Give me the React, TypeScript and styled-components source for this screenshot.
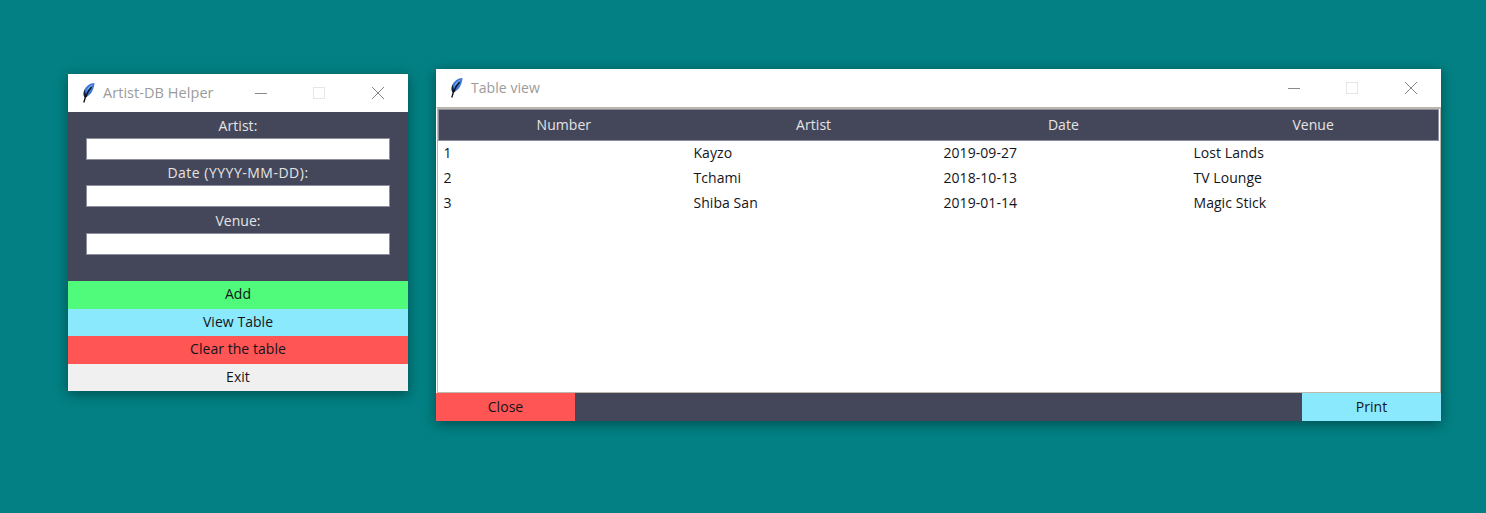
import React from "react";
import styled, { createGlobalStyle } from "styled-components";

const Global = createGlobalStyle`
  html, body { margin: 0; padding: 0; height: 100%; background: #028083; overflow: hidden; }
  #root { width: 1486px; height: 513px; }
  * { box-sizing: border-box; }
`;

const Desktop = styled.div`
  position: relative;
  width: 1486px;
  height: 513px;
  background: #028083;
  font-family: "Open Sans", "Noto Sans", sans-serif;
  font-size: 14px;
  letter-spacing: 0.05px;
`;

const Win = styled.div<{ $x: number; $y: number; $w: number; $h: number }>`
  position: absolute;
  left: ${(p) => p.$x}px;
  top: ${(p) => p.$y}px;
  width: ${(p) => p.$w}px;
  height: ${(p) => p.$h}px;
  display: flex;
  flex-direction: column;
  box-shadow: 0 3px 12px rgba(0, 0, 0, 0.4);
`;

const TitleBar = styled.div`
  height: 38px;
  flex: none;
  background: #fff;
  display: flex;
  align-items: center;
  padding-left: 12px;
  padding-right: 1px;
`;

const AppIcon = styled.svg`
  width: 16px;
  height: 22px;
  flex: none;
  margin-right: 7px;
`;

const Title = styled.div<{ $size?: number }>`
  flex: 1;
  color: #9b9b9b;
  font-size: ${(p) => p.$size ?? 14.5}px;
  line-height: 20px;
`;

const Ctl = styled.div`
  width: 58.5px;
  height: 38px;
  flex: none;
  display: flex;
  align-items: center;
  justify-content: center;
`;

const CtlSvg = styled.svg`
  width: 14px;
  height: 14px;
  fill: none;
  display: block;
`;

const Form = styled.div`
  flex: 1;
  background: #44475a;
  display: flex;
  flex-direction: column;
  align-items: center;
  padding-top: 4px;
`;

const Label = styled.div<{ $track?: number }>`
  height: 20px;
  line-height: 20px;
  color: #e4e4e4;
  letter-spacing: ${(p) => p.$track ?? 0.05}px;
`;

const Field = styled.div`
  width: 304px;
  height: 22px;
  background: #fff;
  border: 1px solid #8d8f9c;
  margin-top: 2px;
  margin-bottom: 3.4px;
`;

const Btn = styled.div<{ $bg: string }>`
  height: 27.5px;
  flex: none;
  background: ${(p) => p.$bg};
  color: #14141a;
  display: flex;
  align-items: center;
  justify-content: center;
  padding-bottom: 2px;
`;

const TableFrame = styled.div`
  flex: 1;
  background: #fff;
  border-top: 1px solid #b9b5ab;
  border-left: 1px solid #fff;
  min-height: 0;
  display: flex;
`;

const TableBorder = styled.div`
  flex: 1;
  min-width: 0;
  border: 1px solid #bdb9af;
  padding-right: 1px;
`;

const HeadRow = styled.div`
  height: 32px;
  background: #44475a;
  border: 1px solid #8d8f9c;
  display: grid;
  grid-template-columns: repeat(4, 1fr);
  align-items: center;
  justify-items: center;
  color: #e4e4e4;
  padding-bottom: 2px;
`;

const DataRow = styled.div`
  height: 25px;
  display: grid;
  grid-template-columns: repeat(4, 250px);
  align-items: center;
  color: #14141a;
  padding-bottom: 2px;
`;

const Cell = styled.div`
  padding-left: 5.5px;
`;

const BottomBar = styled.div`
  height: 28px;
  flex: none;
  background: #44475a;
  display: flex;
  justify-content: space-between;
`;

const BarBtn = styled(Btn)`
  width: 139px;
  height: 28px;
`;

const Feather = () => (
  <AppIcon viewBox="0 0 16 22">
    <path d="M14.5 1 C10 1 5.4 4.5 4 9 C3.3 11.5 3.5 13.8 4.5 15.5 C8.6 14.5 11.6 11.2 13 7.5 C13.9 5.2 14.4 3 14.5 1 Z" fill="#3c76d8" />
    <path d="M13 2.5 C10 3.5 7.5 6 6.4 9 C8.4 7.5 10.8 5.5 13 2.5 Z" fill="#84b6f0" />
    <path d="M4 9 C3.3 11.5 3.5 13.8 4.5 15.5 C5.6 15.2 6.7 14.7 7.7 14 C6 13 5 11.5 4.8 7.6 Z" fill="#14203c" />
    <path d="M11.5 5 C8 9 5.5 14 3.8 20.5" stroke="#111" strokeWidth="1.3" fill="none" />
  </AppIcon>
);

const Controls = () => (
  <>
    <Ctl>
      <CtlSvg viewBox="0 0 14 14"><path d="M1 7.5H13" stroke="#8a8a8a" /></CtlSvg>
    </Ctl>
    <Ctl>
      <CtlSvg viewBox="0 0 14 14"><rect x="1.5" y="1.5" width="11" height="11" stroke="#e6e6e6" /></CtlSvg>
    </Ctl>
    <Ctl>
      <CtlSvg viewBox="0 0 14 14"><path d="M1 1L13 13M13 1L1 13" stroke="#777" strokeWidth="0.9" /></CtlSvg>
    </Ctl>
  </>
);

const rows = [
  ["1", "Kayzo", "2019-09-27", "Lost Lands"],
  ["2", "Tchami", "2018-10-13", "TV Lounge"],
  ["3", "Shiba San", "2019-01-14", "Magic Stick"],
];

export default function App() {
  return (
    <Desktop>
      <Global />
      <Win $x={68} $y={74} $w={340} $h={317}>
        <TitleBar>
          <Feather />
          <Title>Artist-DB Helper</Title>
          <Controls />
        </TitleBar>
        <Form>
          <Label>Artist:</Label>
          <Field />
          <Label $track={0.5}>Date (YYYY-MM-DD):</Label>
          <Field />
          <Label>Venue:</Label>
          <Field />
        </Form>
        <Btn $bg="#50fa7b">Add</Btn>
        <Btn $bg="#8be9fd">View Table</Btn>
        <Btn $bg="#ff5555">Clear the table</Btn>
        <Btn $bg="#f0f0f0">Exit</Btn>
      </Win>
      <Win $x={436} $y={69} $w={1005} $h={352}>
        <TitleBar>
          <Feather />
          <Title $size={14}>Table view</Title>
          <Controls />
        </TitleBar>
        <TableFrame>
          <TableBorder>
            <HeadRow>
              <div>Number</div>
              <div>Artist</div>
              <div>Date</div>
              <div>Venue</div>
            </HeadRow>
            {rows.map((r) => (
              <DataRow key={r[0]}>
                {r.map((c) => (
                  <Cell key={c}>{c}</Cell>
                ))}
              </DataRow>
            ))}
          </TableBorder>
        </TableFrame>
        <BottomBar>
          <BarBtn $bg="#ff5555">Close</BarBtn>
          <BarBtn $bg="#8be9fd">Print</BarBtn>
        </BottomBar>
      </Win>
    </Desktop>
  );
}
